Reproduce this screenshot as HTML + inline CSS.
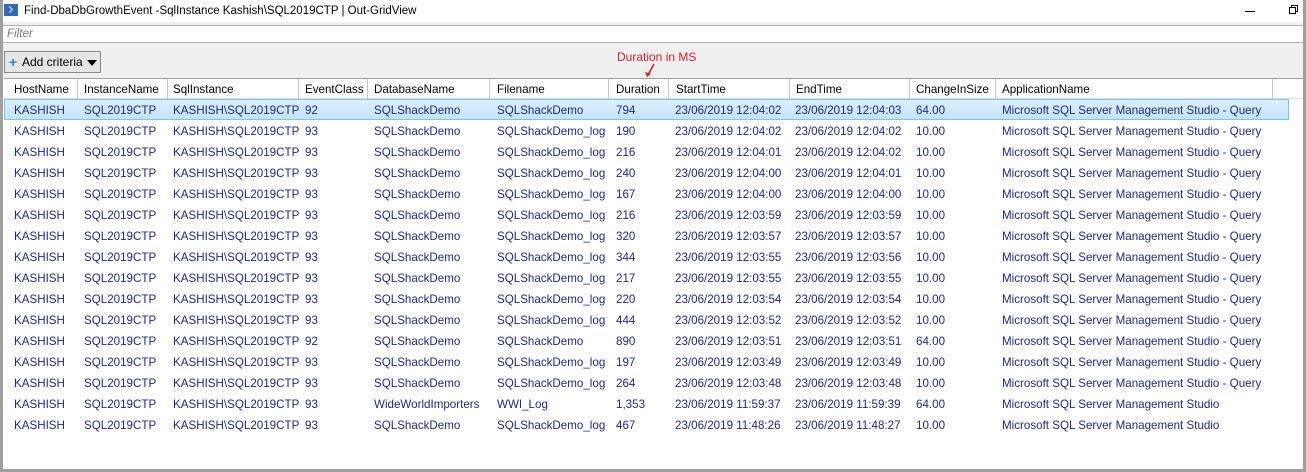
<!DOCTYPE html>
<html><head><style>
*{margin:0;padding:0;box-sizing:border-box}
body{width:1306px;height:472px;overflow:hidden;background:#fff;font-family:"Liberation Sans",sans-serif;font-size:11.6px;position:relative}
.frame{position:absolute;left:0;top:0;width:1306px;height:472px;border:3px solid #a0a0a0;border-top:none}
.title{position:absolute;left:24px;top:5px;font-size:11.5px;color:#000}
.ps{position:absolute;left:4px;top:4px;width:14px;height:12px;background:#2a6bbf}
.ps:after{content:"";position:absolute;left:3px;top:3px;width:4px;height:4px;border-right:1.5px solid #fff;border-bottom:1.5px solid #fff;transform:rotate(-45deg)}
.tool{position:absolute;left:3px;top:22px;width:1300px;height:56px;background:#f0f0f0}
.filter{position:absolute;left:3px;top:25px;width:1300px;height:18px;background:#fff;border-top:1px solid #b0b0b0;border-bottom:1px solid #b0b0b0;color:#777;font-style:italic;padding-left:4px;line-height:16px}
.btn{position:absolute;left:4px;top:51px;width:97px;height:22px;border:1px solid #8a8a8a;background:#e6e6e6;line-height:20px;padding-left:17px;font-size:12px}
.btn .plus{position:absolute;left:4px;top:0;color:#2b8ad8;font-weight:bold;font-size:14px}
.btn .tri{position:absolute;left:82px;top:8px;border-left:5px solid transparent;border-right:5px solid transparent;border-top:6px solid #000}
.grid{position:absolute;left:4px;top:78px;width:1299px;height:391px;background:#fff;border-top:1px solid #a0a0a0}
.hdr{position:absolute;left:0;top:0;width:1299px;height:20px;border-bottom:1px solid #ddd}
.hc{position:absolute;top:4px;color:#000}
.sep{position:absolute;top:0;width:1px;height:20px;background:#c8c8c8}
.row{position:absolute;left:0;width:1285px;height:21px}
.sel{background:linear-gradient(#dcf0fc,#c2e4f8);box-shadow:inset 0 0 0 1px #7dc4ee}
.c{position:absolute;top:5px;color:#1c2a80;white-space:nowrap}
.ann{position:absolute;left:617px;top:50px;color:#d0202a;font-size:12px}
</style></head><body>
<div class="ps"></div>
<div class="title">Find-DbaDbGrowthEvent -SqlInstance Kashish\SQL2019CTP | Out-GridView</div>
<div style="position:absolute;left:1245px;top:11px;width:10px;height:1px;background:#000"></div>
<div style="position:absolute;left:1289px;top:7px;width:7px;height:7px;border:1px solid #000;box-shadow:2px -2px 0 -1px #fff,2px -2px 0 0 #000"></div>
<div class="tool"></div>
<div class="filter">Filter</div>
<div class="btn"><span class="plus">+</span>Add criteria<span class="tri"></span></div>
<div class="ann">Duration in MS</div>
<svg style="position:absolute;left:644px;top:63px" width="14" height="16"><path d="M10 1 L4 12" stroke="#d0202a" stroke-width="1.6"/><path d="M1 9 L3 14 L7 11 Z" fill="#d0202a"/></svg>
<div class="grid">
<div class="hdr">
<span class="hc" style="left:10px">HostName</span><div class="sep" style="left:73px"></div>
<span class="hc" style="left:80px">InstanceName</span><div class="sep" style="left:163px"></div>
<span class="hc" style="left:169px">SqlInstance</span><div class="sep" style="left:294px"></div>
<span class="hc" style="left:301px">EventClass</span><div class="sep" style="left:363px"></div>
<span class="hc" style="left:370px">DatabaseName</span><div class="sep" style="left:485px"></div>
<span class="hc" style="left:493px">Filename</span><div class="sep" style="left:604px"></div>
<span class="hc" style="left:612px">Duration</span><div class="sep" style="left:664px"></div>
<span class="hc" style="left:672px">StartTime</span><div class="sep" style="left:785px"></div>
<span class="hc" style="left:792px">EndTime</span><div class="sep" style="left:905px"></div>
<span class="hc" style="left:912px">ChangeInSize</span><div class="sep" style="left:991px"></div>
<span class="hc" style="left:998px">ApplicationName</span><div class="sep" style="left:1268px"></div>
</div>
<div id="rows"></div>
</div>
<script>
var d=[["92","SQLShackDemo","SQLShackDemo","794","12:04:02","12:04:03","64.00",1],
["93","SQLShackDemo","SQLShackDemo_log","190","12:04:02","12:04:02","10.00",1],
["93","SQLShackDemo","SQLShackDemo_log","216","12:04:01","12:04:02","10.00",1],
["93","SQLShackDemo","SQLShackDemo_log","240","12:04:00","12:04:01","10.00",1],
["93","SQLShackDemo","SQLShackDemo_log","167","12:04:00","12:04:00","10.00",1],
["93","SQLShackDemo","SQLShackDemo_log","216","12:03:59","12:03:59","10.00",1],
["93","SQLShackDemo","SQLShackDemo_log","320","12:03:57","12:03:57","10.00",1],
["93","SQLShackDemo","SQLShackDemo_log","344","12:03:55","12:03:56","10.00",1],
["93","SQLShackDemo","SQLShackDemo_log","217","12:03:55","12:03:55","10.00",1],
["93","SQLShackDemo","SQLShackDemo_log","220","12:03:54","12:03:54","10.00",1],
["93","SQLShackDemo","SQLShackDemo_log","444","12:03:52","12:03:52","10.00",1],
["92","SQLShackDemo","SQLShackDemo","890","12:03:51","12:03:51","64.00",1],
["93","SQLShackDemo","SQLShackDemo_log","197","12:03:49","12:03:49","10.00",1],
["93","SQLShackDemo","SQLShackDemo_log","264","12:03:48","12:03:48","10.00",1],
["93","WideWorldImporters","WWI_Log","1,353","11:59:37","11:59:39","64.00",0],
["93","SQLShackDemo","SQLShackDemo_log","467","11:48:26","11:48:27","10.00",0]];
var h="";
d.forEach(function(r,i){
h+='<div class="row'+(i==0?' sel':'')+'" style="top:'+(20+i*21)+'px">'+
'<span class="c" style="left:10px">KASHISH</span><span class="c" style="left:80px">SQL2019CTP</span><span class="c" style="left:169px">KASHISH\\SQL2019CTP</span>'+
'<span class="c" style="left:301px">'+r[0]+'</span><span class="c" style="left:370px">'+r[1]+'</span><span class="c" style="left:493px">'+r[2]+'</span>'+
'<span class="c" style="left:612px">'+r[3]+'</span><span class="c" style="left:671px">23/06/2019 '+r[4]+'</span><span class="c" style="left:791px">23/06/2019 '+r[5]+'</span>'+
'<span class="c" style="left:912px">'+r[6]+'</span><span class="c" style="left:998px">Microsoft SQL Server Management Studio'+(r[7]?' - Query':'')+'</span></div>';});
document.getElementById("rows").innerHTML=h;
</script>
<div class="frame"></div>
</body></html>
